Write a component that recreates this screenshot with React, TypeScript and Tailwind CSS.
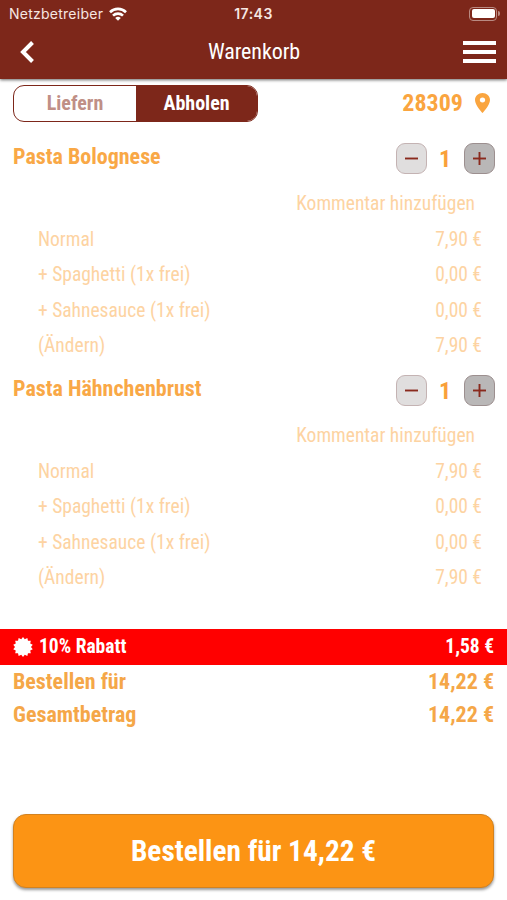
import React from "react";

const options = [
  ["Normal", "7,90 €"],
  ["+ Spaghetti (1x frei)", "0,00 €"],
  ["+ Sahnesauce (1x frei)", "0,00 €"],
  ["(Ändern)", "7,90 €"],
];

function StepButton({ plus }: { plus?: boolean }) {
  return (
    <button
      className={`flex h-[31px] w-[31px] items-center justify-center rounded-[9px] border ${
        plus ? "border-[#9c8f8f] bg-[#b9b7b7]" : "border-[#c4b3b3] bg-[#e0dede]"
      }`}
    >
      <svg width="15" height="15" viewBox="0 0 15 15" stroke="#8a2a1d" strokeWidth="1.9" fill="none">
        <path d="M1 7.5h13" />
        {plus && <path d="M7.5 1v13" />}
      </svg>
    </button>
  );
}

function CartItem({ name }: { name: string }) {
  return (
    <section className="h-[232px]">
      <div className="flex h-[55px] items-center justify-between pl-[13px] pr-[12.5px]">
        <h2 className="pb-[4px] text-[22px] font-bold text-[#f9a846]">{name}</h2>
        <div className="flex items-center">
          <StepButton />
          <span className="w-[37px] text-center text-[24px] font-bold text-[#f9a03a]">1</span>
          <StepButton plus />
        </div>
      </div>
      <div className="flex h-[35.4px] items-center justify-end pt-px pr-8 text-[19.5px] text-[#fdd3a2]">
        Kommentar hinzufügen
      </div>
      {options.map(([label, price]) => (
        <div key={label} className="flex h-[35.4px] items-center justify-between pt-px pl-[38px] pr-[25px] text-[19.5px] text-[#fdd3a2]">
          <span>{label}</span>
          <span>{price}</span>
        </div>
      ))}
    </section>
  );
}

const starPoints = Array.from({ length: 28 }, (_, i) => {
  const r = i % 2 ? 8 : 10;
  const a = (i * Math.PI) / 14;
  return `${10 + r * Math.sin(a)},${10 - r * Math.cos(a)}`;
}).join(" ");

export default function App() {
  return (
    <div className="flex h-[900px] w-[507px] flex-col overflow-hidden bg-white font-['Roboto_Condensed',Roboto,sans-serif] leading-none [font-stretch:75%]">
      <header className="h-[79px] shrink-0 bg-[#7d271a] text-white shadow-[0_1px_3px_rgba(0,0,0,0.6)]">
        <div className="grid h-[27px] grid-cols-3 items-center pl-[9px] pr-[7px] font-[Inter,sans-serif] text-[14px] text-[#f6e6e2] [font-stretch:100%]">
          <div className="flex items-center gap-[6px]">
            <span className="tracking-[0.25px]">Netzbetreiber</span>
            <svg width="18" height="14" viewBox="0 0 18 14" fill="none" stroke="white" strokeWidth="2.6">
              <path d="M1 5.2a11.4 11.4 0 0 1 16 0M4 8.7a7.1 7.1 0 0 1 10 0" />
              <path d="M9 13.8L6.2 11a4 4 0 0 1 5.6 0z" fill="white" stroke="none" />
            </svg>
          </div>
          <span className="pr-[2px] text-center font-semibold tracking-[0.5px]">17:43</span>
          <div className="flex items-center justify-end">
            <div className="h-[14px] w-[28px] rounded-[4px] border border-[#b98a82] p-[1.5px]">
              <div className="h-full rounded-[2px] bg-white" />
            </div>
            <div className="ml-px h-[5px] w-[2px] rounded-r bg-[#b98a82]" />
          </div>
        </div>
        <div className="grid h-[50px] grid-cols-3 items-center pl-[20px] pr-[11px]">
          <svg width="15" height="22" viewBox="0 0 15 22" fill="none" stroke="white" strokeWidth="4">
            <path d="M12.5 1.5L3 11l9.500 9.500" />
          </svg>
          <h1 className="pr-[8px] text-center text-[22px] tracking-[-0.1px]">Warenkorb</h1>
          <div className="flex w-[33px] flex-col gap-[5px] justify-self-end">
            <div className="h-[4px] bg-white" />
            <div className="h-[4px] bg-white" />
            <div className="h-[4px] bg-white" />
          </div>
        </div>
      </header>
      <div className="flex h-[52px] shrink-0 items-start justify-between pl-[13px] pr-[17px] pt-[6px]">
        <div className="flex h-[37px] w-[245px] overflow-hidden rounded-[11px] border border-[#7d271a] text-[20px] font-bold">
          <div className="flex w-[122px] items-center justify-center pb-[2px] text-[#c08f86]">Liefern</div>
          <div className="flex flex-1 items-center justify-center bg-[#7d271a] pb-[2px] text-white">Abholen</div>
        </div>
        <div className="flex h-[37px] items-center gap-[12px] pb-px text-[24px] font-bold text-[#faa53f]">
          <span>28309</span>
          <svg width="15" height="20" viewBox="5 2 14 20" preserveAspectRatio="none" fill="#faa53f">
            <path d="M12 2C8.130 2 5 5.130 5 9c0 5.250 7 13 7 13s7-7.750 7-13c0-3.870-3.130-7-7-7zm0 9.500a2.500 2.500 0 0 1 0-5 2.500 2.500 0 0 1 0 5z" />
          </svg>
        </div>
      </div>
      <CartItem name="Pasta Bolognese" />
      <CartItem name="Pasta Hähnchenbrust" />
      <div className="mt-[34px] flex h-[36px] shrink-0 items-center justify-between bg-[#ff0000] px-[13px] text-[19.500px] font-bold text-white">
        <div className="flex items-center gap-[6px]">
          <svg width="20" height="20" viewBox="0 0 20 20" fill="white">
            <polygon points={starPoints} />
          </svg>
          <span>10% Rabatt</span>
        </div>
        <span>1,58 €</span>
      </div>
      {["Bestellen für", "Gesamtbetrag"].map((label) => (
        <div key={label} className="flex h-[33px] shrink-0 items-center justify-between px-[13px] text-[22px] font-bold text-[#f5a748]">
          <span>{label}</span>
          <span>14,22 €</span>
        </div>
      ))}
      <button className="mx-[13px] mt-[83px] h-[74px] shrink-0 rounded-[13px] border border-[#d3821f] bg-[#fc9414] pt-[2px] text-[29.3px] font-bold text-white shadow-[0_2px_3px_rgba(0,0,0,0.4)]">
        Bestellen für 14,22 €
      </button>
    </div>
  );
}
